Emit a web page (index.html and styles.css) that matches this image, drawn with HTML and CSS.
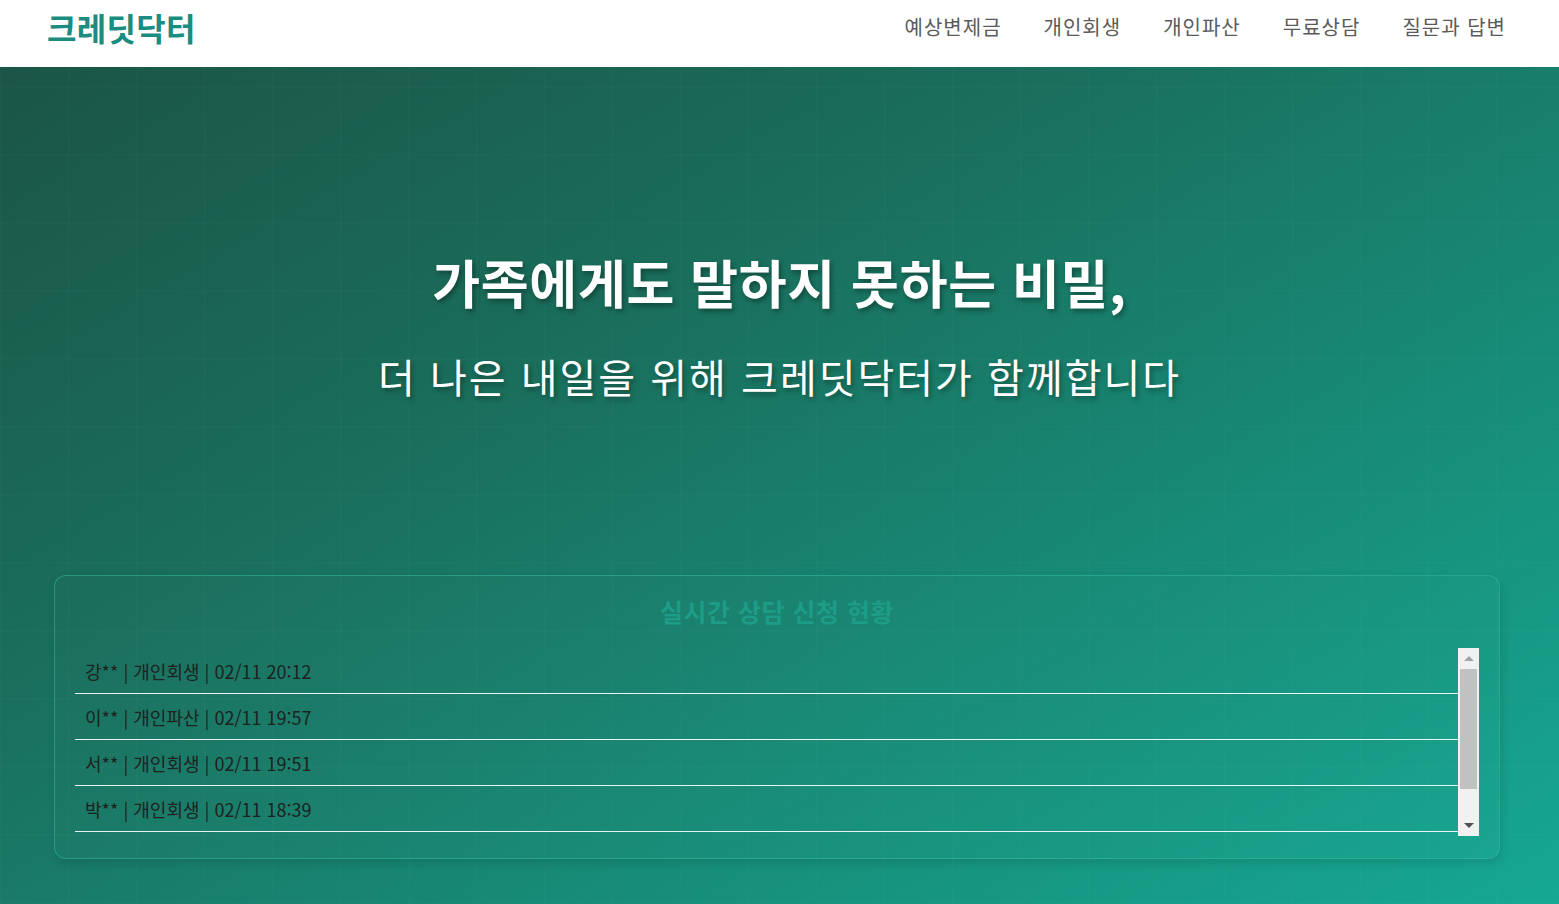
FILE: index.html
```html
<!DOCTYPE html>
<html lang="ko">
<head>
<meta charset="utf-8">
<title>크레딧닥터</title>
<link rel="stylesheet" href="styles.css">
</head>
<body>
<header class="site-header">
  <div class="logo">크레딧닥터</div>
  <nav class="nav">
    <a class="nav-link" href="#">예상변제금</a>
    <a class="nav-link" href="#">개인회생</a>
    <a class="nav-link" href="#">개인파산</a>
    <a class="nav-link" href="#">무료상담</a>
    <a class="nav-link" href="#">질문과 답변</a>
  </nav>
</header>
<main class="hero">
  <section class="hero-text">
    <h1 class="hero-title">가족에게도 말하지 못하는 비밀,</h1>
    <p class="hero-sub">더 나은 내일을 위해 크레딧닥터가 함께합니다</p>
  </section>
  <section class="live-card">
    <h2 class="live-title">실시간 상담 신청 현황</h2>
    <div class="live-box">
      <ul class="live-list">
        <li class="live-row">강** | 개인회생 | 02/11 20:12</li>
        <li class="live-row">이** | 개인파산 | 02/11 19:57</li>
        <li class="live-row">서** | 개인회생 | 02/11 19:51</li>
        <li class="live-row">박** | 개인회생 | 02/11 18:39</li>
      </ul>
      <div class="scrollbar" aria-hidden="true">
        <div class="sb-btn sb-up"><span class="tri-up"></span></div>
        <div class="sb-track"><div class="sb-thumb"></div></div>
        <div class="sb-btn sb-down"><span class="tri-down"></span></div>
      </div>
    </div>
  </section>
</main>
</body>
</html>
```
FILE: styles.css
```css
* { box-sizing: border-box; }
html, body { margin: 0; padding: 0; }
body {
  font-family: "Noto Sans CJK KR", "Noto Sans", sans-serif;
  background: #17a08c;
  width: 1559px;
  height: 904px;
  overflow: hidden;
}
.site-header {
  height: 67px;
  background: #fff;
  display: flex;
  align-items: center;
  justify-content: space-between;
  padding: 0 53px 0 47px;
}
.logo {
  font-size: 32px;
  font-weight: 700;
  color: #1a8c80;
  letter-spacing: 0.3px;
  margin-top: -13px;
}
.nav { display: flex; gap: 42px; margin-top: -14px; }
.nav-link {
  font-size: 20px;
  color: #5a5a5a;
  text-decoration: none;
  letter-spacing: 1px;
}
.hero {
  height: 837px;
  background:
    repeating-linear-gradient(90deg, rgba(255,255,255,0.01) 0 2px, transparent 2px 68px),
    repeating-linear-gradient(0deg, rgba(255,255,255,0.01) 0 2px, transparent 2px 68px),
    linear-gradient(150deg, #1b5545 0%, #1a6e5c 35%, #178a76 65%, #16a892 100%);
  padding-top: 184px;
  overflow: hidden;
}
.hero-text { text-align: center; color: #fff; }
.hero-title {
  margin: 0;
  font-size: 52px;
  line-height: 62px;
  font-weight: 700;
  letter-spacing: 0.7px;
  text-shadow: 2px 3px 5px rgba(0,0,0,0.35);
}
.hero-sub {
  margin: 38px 0 0;
  font-size: 40px;
  line-height: 50px;
  font-weight: 400;
  letter-spacing: 2px;
  text-shadow: 2px 3px 5px rgba(0,0,0,0.35);
}
.live-card {
  margin: 174px 59px 0 54px;
  border: 1px solid rgba(50, 185, 160, 0.55);
  border-radius: 12px;
  background: rgba(255,255,255,0.012);
  box-shadow: 2px 4px 10px rgba(0,0,0,0.12);
  padding: 20px 20px 22px;
}
.live-title {
  margin: 0 0 21px;
  text-align: center;
  font-size: 25px;
  line-height: 31px;
  font-weight: 700;
  color: #1d9c88;
  letter-spacing: 0.5px;
}
.live-box {
  display: flex;
  height: 188px;
}
.live-list {
  flex: 1;
  list-style: none;
  margin: 0;
  padding: 0;
  overflow: hidden;
}
.live-row {
  height: 46px;
  border-bottom: 1px solid rgba(255,255,255,0.9);
  padding-left: 10px;
  display: flex;
  align-items: center;
  font-size: 18px;
  color: #1c2320;
  letter-spacing: 0;
}
.scrollbar {
  width: 21px;
  background: #f1f1f1;
  display: flex;
  flex-direction: column;
}
.sb-btn {
  height: 21px;
  display: flex;
  align-items: center;
  justify-content: center;
}
.tri-up, .tri-down {
  width: 0;
  height: 0;
  border-left: 5px solid transparent;
  border-right: 5px solid transparent;
}
.tri-up { border-bottom: 5px solid #a3a3a3; }
.tri-down { border-top: 5px solid #505050; }
.sb-track {
  flex: 1;
  padding: 0 2px;
}
.sb-thumb {
  height: 120px;
  background: #c1c1c1;
}
```
